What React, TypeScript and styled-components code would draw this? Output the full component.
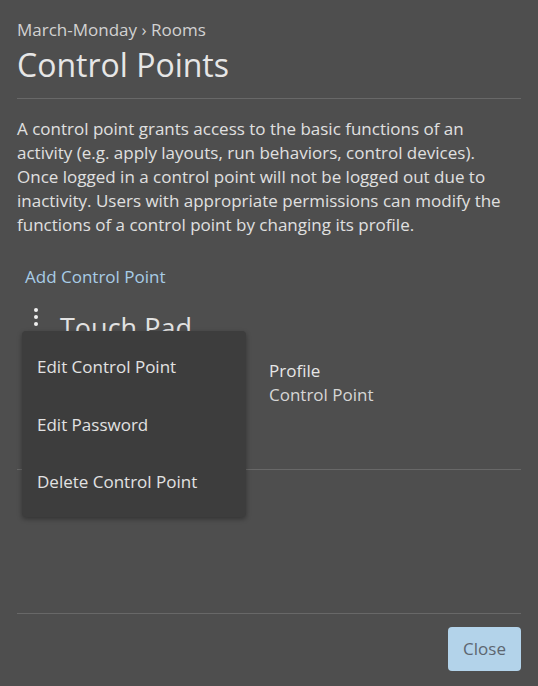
import React from "react";
import styled, { createGlobalStyle } from "styled-components";

const Global = createGlobalStyle`
  html, body { margin: 0; padding: 0; background: #4e4e4e; }
  body { font-family: "Open Sans", "Lato", sans-serif; color: #e2e2e2; }
  * { box-sizing: border-box; }
`;

const Page = styled.div`
  width: 538px;
  height: 686px;
  padding: 18px 17px 0 17px;
  display: flex;
  flex-direction: column;
  position: relative;
  overflow: hidden;
`;

const Breadcrumb = styled.div`
  font-size: 17px;
  line-height: 24px;
  color: #d2d2d2;
  font-weight: 500;
`;

const Title = styled.h1`
  margin: 3px 0 0 0;
  font-size: 32px;
  line-height: 40px;
  font-weight: 400;
  color: #e6e6e6;
`;

const Divider = styled.div<{ $mt: number }>`
  height: 1px;
  background: #686868;
  margin-top: ${(p) => p.$mt}px;
  flex: none;
`;

const Description = styled.p`
  margin: 18px 0 0 0;
  padding-right: 10px;
  font-size: 17px;
  line-height: 24px;
  color: #e0e0e0;
`;

const AddLink = styled.a`
  display: block;
  margin: 28px 0 0 8px;
  font-size: 17px;
  line-height: 24px;
  color: #a8cce6;
  text-decoration: none;
`;

const Row = styled.div`
  display: flex;
  margin-top: 18px;
  height: 162px;
`;

const Kebab = styled.button`
  width: 22px;
  margin-left: 8px;
  padding: 0;
  border: none;
  background: transparent;
  display: flex;
  flex-direction: column;
  align-items: center;
  gap: 3px;
  align-self: flex-start;
  padding-top: 1px;
  cursor: pointer;
`;

const Dot = styled.span`
  width: 4px;
  height: 4px;
  border-radius: 50%;
  background: #f0f0f0;
`;

const CardBody = styled.div`
  display: flex;
  flex-direction: column;
  margin-left: 13px;
`;

const CardTitle = styled.div`
  font-size: 27px;
  line-height: 32px;
  color: #e2e2e2;
  margin-top: 5px;
`;

const Fields = styled.div`
  display: flex;
  margin-top: 15px;
  padding-left: 209px;
`;

const Field = styled.div`
  display: flex;
  flex-direction: column;
`;

const FieldLabel = styled.div`
  font-size: 17px;
  line-height: 24px;
  color: #e6e6e6;
  font-weight: 500;
`;

const FieldValue = styled.div`
  font-size: 17px;
  line-height: 24px;
  color: #d6d6d6;
`;

const Spacer = styled.div`
  flex: 1;
`;

const Footer = styled.div`
  display: flex;
  justify-content: flex-end;
  padding: 13px 0 15px 0;
`;

const CloseButton = styled.button`
  width: 73px;
  height: 44px;
  border: none;
  border-radius: 4px;
  background: #b3d3ea;
  color: #5d6670;
  font-family: inherit;
  font-size: 17px;
  line-height: 1;
  padding: 0 0 2px 0;
  cursor: pointer;
`;

const Menu = styled.div`
  position: absolute;
  left: 22px;
  top: 331px;
  width: 224px;
  height: 186px;
  background: #3d3d3d;
  border-radius: 4px;
  box-shadow: 0 2px 5px rgba(0, 0, 0, 0.35);
  display: flex;
  flex-direction: column;
  padding-top: 7px;
`;

const MenuItem = styled.div`
  height: 57.5px;
  display: flex;
  align-items: center;
  padding-left: 15px;
  font-size: 17px;
  color: #e2e2e2;
`;

export default function App() {
  return (
    <>
      <Global />
      <Page>
        <Breadcrumb>March-Monday › Rooms</Breadcrumb>
        <Title>Control Points</Title>
        <Divider $mt={13} />
        <Description>
          A control point grants access to the basic functions of an activity
          (e.g. apply layouts, run behaviors, control devices). Once logged in a
          control point will not be logged out due to inactivity. Users with
          appropriate permissions can modify the functions of a control point by
          changing its profile.
        </Description>
        <AddLink href="#">Add Control Point</AddLink>
        <Row>
          <Kebab aria-label="More">
            <Dot />
            <Dot />
            <Dot />
          </Kebab>
          <CardBody>
            <CardTitle>Touch Pad</CardTitle>
            <Fields>
              <Field>
                <FieldLabel>Profile</FieldLabel>
                <FieldValue>Control Point</FieldValue>
              </Field>
            </Fields>
          </CardBody>
        </Row>
        <Divider $mt={0} />
        <Spacer />
        <Divider $mt={0} />
        <Footer>
          <CloseButton>Close</CloseButton>
        </Footer>
        <Menu>
          <MenuItem>Edit Control Point</MenuItem>
          <MenuItem>Edit Password</MenuItem>
          <MenuItem>Delete Control Point</MenuItem>
        </Menu>
      </Page>
    </>
  );
}
